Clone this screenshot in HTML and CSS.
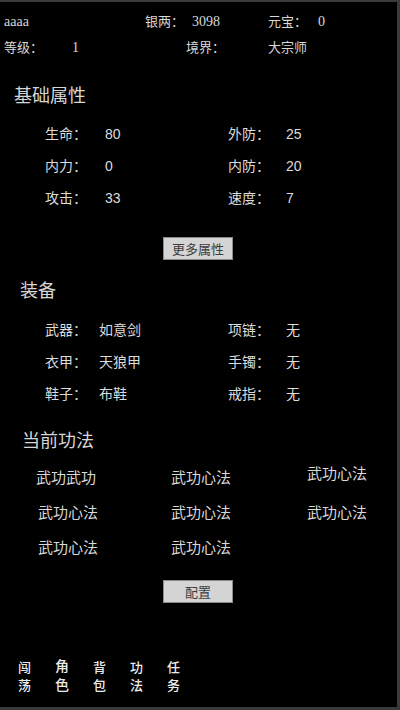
FILE: index.html
```html
<!DOCTYPE html>
<html lang="zh">
<head>
<meta charset="utf-8">
<link rel="stylesheet" href="styles.css">
</head>
<body>
<div class="frame">
  <div class="top">
    <div class="toprow row1">
      <span class="name serif">aaaa</span>
      <span>银两：</span><span class="serif">3098</span>
      <span>元宝：</span><span class="serif">0</span>
    </div>
    <div class="toprow row2">
      <span>等级：</span><span class="serif">1</span>
      <span>境界：</span><span>大宗师</span>
    </div>
  </div>

  <h2 class="heading h-base">基础属性</h2>
  <div class="grid stats">
    <span>生命：</span><span>80</span><span>外防：</span><span>25</span>
    <span>内力：</span><span>0</span><span>内防：</span><span>20</span>
    <span>攻击：</span><span>33</span><span>速度：</span><span>7</span>
  </div>
  <div class="btnrow"><button class="btn">更多属性</button></div>

  <h2 class="heading h-equip">装备</h2>
  <div class="grid equip">
    <span>武器：</span><span>如意剑</span><span>项链：</span><span>无</span>
    <span>衣甲：</span><span>天狼甲</span><span>手镯：</span><span>无</span>
    <span>鞋子：</span><span>布鞋</span><span>戒指：</span><span>无</span>
  </div>

  <h2 class="heading h-skill">当前功法</h2>
  <div class="skills">
    <span class="s1">武功武功</span><span class="s2">武功心法</span><span class="s3 up">武功心法</span>
    <span class="s1b">武功心法</span><span class="s2">武功心法</span><span class="s3">武功心法</span>
    <span class="s1b">武功心法</span><span class="s2">武功心法</span><span></span>
  </div>
  <div class="btnrow btn2"><button class="btn">配置</button></div>

  <nav class="nav">
    <span class="tab">闯<br>荡</span>
    <span class="tab big">角<br>色</span>
    <span class="tab">背<br>包</span>
    <span class="tab">功<br>法</span>
    <span class="tab">任<br>务</span>
  </nav>
</div>
</body>
</html>
```

FILE: styles.css
```css
html, body {
  margin: 0;
  padding: 0;
  background: #000;
}
body {
  width: 400px;
  height: 710px;
  font-family: "Liberation Sans", "Noto Sans CJK SC", sans-serif;
  color: #dcdcdc;
}
.frame {
  box-sizing: border-box;
  width: 400px;
  height: 710px;
  border-top: 2px solid #3a3a3a;
  border-right: 3px solid #3a3a3a;
  border-bottom: 3px solid #3a3a3a;
  position: relative;
  overflow: hidden;
}
.serif {
  font-family: "Liberation Serif", "Noto Sans CJK SC", serif;
  font-size: 14px;
}
.top {
  padding-top: 6px;
  font-size: 13px;
  color: #d8d8d8;
}
.toprow {
  display: grid;
  height: 27px;
  line-height: 27px;
  padding-left: 4px;
}
.row1 {
  grid-template-columns: 141px 47px 76px 50px auto;
}
.row2 {
  height: 26px;
  line-height: 26px;
  grid-template-columns: 68px 114px 82px auto;
}
.heading {
  margin: 0;
  font-size: 18px;
  font-weight: normal;
  line-height: 26px;
  color: #d6d6d6;
}
.h-base { padding-left: 14px; margin-top: 22px; }
.h-equip { padding-left: 20px; margin-top: 18px; }
.h-skill { padding-left: 22px; margin-top: 18px; }
.grid {
  display: grid;
  font-size: 14px;
  line-height: 32px;
  padding-left: 45px;
}
.stats {
  grid-template-columns: 60px 123px 58px auto;
  margin-top: 9px;
}
.equip {
  grid-template-columns: 54px 129px 58px auto;
  margin-top: 10px;
}
.btnrow {
  display: flex;
  padding-left: 163px;
  margin-top: 23px;
}
.btn {
  width: 70px;
  height: 23px;
  padding: 0;
  background: #d4d4d4;
  border: 1px solid #8a8a8a;
  color: #3c3c3c;
  font-family: "Noto Sans CJK SC", sans-serif;
  font-size: 13px;
  line-height: 21px;
}
.skills {
  display: grid;
  grid-template-columns: 135px 136px auto;
  padding-left: 36px;
  margin-top: 6px;
  font-size: 15px;
  line-height: 35px;
  color: #d8d8d8;
}
.skills .s1b { padding-left: 2px; }
.skills .up { position: relative; top: -4px; }
.btn2 { margin-top: 15px; }
.nav {
  position: absolute;
  left: 18px;
  top: 657px;
  display: flex;
  gap: 24px;
  font-size: 13px;
  line-height: 18px;
  color: #ececec;
  font-weight: 500;
}
.tab { width: 13px; }
.tab.big { font-size: 14px; width: 14px; line-height: 19px; margin-top: -2px; }
```
